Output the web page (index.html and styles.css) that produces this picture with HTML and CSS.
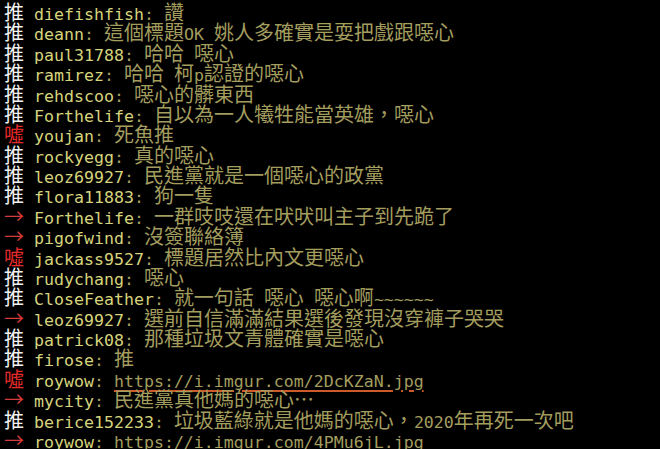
FILE: index.html
```html
<!DOCTYPE html>
<html lang="zh-Hant">
<head>
    <meta charset="UTF-8">
    <meta name="viewport" content="width=device-width, initial-scale=1.0">
    <title>推文</title>
    <link rel="stylesheet" href="styles.css">
</head>
<body>
    <div class="screen">
        <!-- push lines -->
        <div class="line"><span class="tag push">推</span><span class="u">diefishfish</span><span class="a">: </span>讚</div>
        <div class="line"><span class="tag push">推</span><span class="u">deann</span><span class="a">: </span>這個標題<span class="a">OK </span>姚人多確實是耍把戲跟噁心</div>
        <div class="line"><span class="tag push">推</span><span class="u">paul31788</span><span class="a">: </span>哈哈<span class="a"> </span>噁心</div>
        <div class="line"><span class="tag push">推</span><span class="u">ramirez</span><span class="a">: </span>哈哈<span class="a"> </span>柯<span class="a">p</span>認證的噁心</div>
        <div class="line"><span class="tag push">推</span><span class="u">rehdscoo</span><span class="a">: </span>噁心的髒東西</div>
        <div class="line"><span class="tag push">推</span><span class="u">Forthelife</span><span class="a">: </span>自以為一人犧牲能當英雄，噁心</div>
        <div class="line"><span class="tag boo">噓</span><span class="u">youjan</span><span class="a">: </span>死魚推</div>
        <div class="line"><span class="tag push">推</span><span class="u">rockyegg</span><span class="a">: </span>真的噁心</div>
        <div class="line"><span class="tag push">推</span><span class="u">leoz69927</span><span class="a">: </span>民進黨就是一個噁心的政黨</div>
        <div class="line"><span class="tag push">推</span><span class="u">flora11883</span><span class="a">: </span>狗一隻</div>
        <div class="line"><span class="tag arrow">→</span><span class="u">Forthelife</span><span class="a">: </span>一群吱吱還在吠吠叫主子到先跪了</div>
        <div class="line"><span class="tag arrow">→</span><span class="u">pigofwind</span><span class="a">: </span>沒簽聯絡簿</div>
        <div class="line"><span class="tag boo">噓</span><span class="u">jackass9527</span><span class="a">: </span>標題居然比內文更噁心</div>
        <div class="line"><span class="tag push">推</span><span class="u">rudychang</span><span class="a">: </span>噁心</div>
        <div class="line"><span class="tag push">推</span><span class="u">CloseFeather</span><span class="a">: </span>就一句話<span class="a"> </span>噁心<span class="a"> </span>噁心啊<span class="a">~~~~~~</span></div>
        <div class="line"><span class="tag arrow">→</span><span class="u">leoz69927</span><span class="a">: </span>選前自信滿滿結果選後發現沒穿褲子哭哭</div>
        <div class="line"><span class="tag push">推</span><span class="u">patrick08</span><span class="a">: </span>那種垃圾文青體確實是噁心</div>
        <div class="line"><span class="tag push">推</span><span class="u">firose</span><span class="a">: </span>推</div>
        <div class="line"><span class="tag boo">噓</span><span class="u">roywow</span><span class="a">: </span><span class="a link">https://i.imgur.com/2DcKZaN.jpg</span></div>
        <div class="line"><span class="tag arrow">→</span><span class="u">mycity</span><span class="a">: </span>民進黨真他媽的噁心…</div>
        <div class="line"><span class="tag push">推</span><span class="u">berice152233</span><span class="a">: </span>垃圾藍綠就是他媽的噁心，<span class="a">2020</span>年再死一次吧</div>
        <div class="line"><span class="tag arrow">→</span><span class="u">roywow</span><span class="a">: </span><span class="a link">https://i.imgur.com/4PMu6jL.jpg</span></div>
    </div>
</body>
</html>
```

FILE: styles.css
```css
html, body {
    margin: 0;
    background-color: #000;
}
.screen {
    padding: 2px 0 0 4px;
    height: 447px;
    overflow: hidden;
}
.line {
    height: 20.38px;
    line-height: 20.38px;
    font-family: "Noto Sans CJK TC", sans-serif;
    font-size: 20px;
    color: #a39d5e;
    white-space: pre;
}
.tag {
    display: inline-block;
    width: 30px;
}
.push {
    color: #f2f2f2;
}
.boo {
    color: #e52a2a;
}
.arrow {
    color: #d63b3b;
}
.u, .a {
    font-family: "DejaVu Sans Mono", monospace;
    font-size: 16.6px;
}
.u {
    color: #d6d47c;
}
.link {
    text-decoration: underline;
    text-decoration-color: #cc5a2a;
    text-decoration-thickness: 2px;
    text-underline-offset: 3px;
}
```
